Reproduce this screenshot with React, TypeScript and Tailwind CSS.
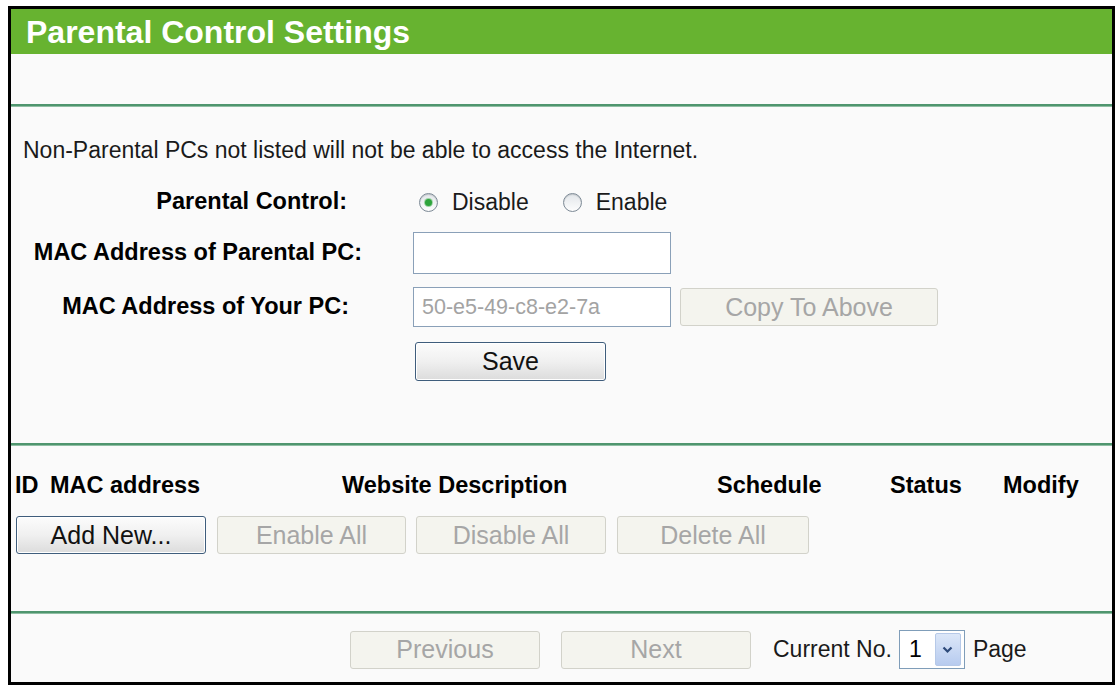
import React from "react";

function Btn({
  label,
  enabled,
  className,
}: {
  label: string;
  enabled?: boolean;
  className: string;
}) {
  return (
    <div
      className={
        (enabled
          ? "border border-[#3f5d7c] bg-linear-to-b from-[#fcfcfc] via-[#f0f0f0] to-[#dcdcdc] text-[#111] shadow-[inset_0_0_0_1px_#ffffff] "
          : "border border-[#d2d2ca] bg-[#f4f4ee] text-[#a6a6a6] ") +
        "rounded-[3px] flex items-center justify-center text-[25px] leading-none shrink-0 " +
        className
      }
    >
      {label}
    </div>
  );
}

function Radio({ checked }: { checked?: boolean }) {
  return (
    <div className="w-[19px] h-[19px] rounded-full border border-[#7d8a96] bg-linear-to-b from-[#e2e6ea] to-[#fdfdfd] flex items-center justify-center shrink-0 shadow-[inset_0_1px_1px_rgba(0,0,0,0.15)]">
      {checked && (
        <div className="w-[7px] h-[7px] rounded-full bg-[#2ea43c] shadow-[0_0_0_1px_#9fd3a6]" />
      )}
    </div>
  );
}

function Line() {
  return <div className="h-[3px] bg-[#4f956e] border-b border-[#8fbea3] shrink-0" />;
}

export default function App() {
  return (
    <div className="w-[1118px] h-[687px] bg-white pt-[6px] pl-[8px] font-['Liberation_Sans',Arial,sans-serif]">
      <div className="w-[1107px] h-[679px] border-[3px] border-black bg-[#fafafa] flex flex-col">
        {/* Title bar */}
        <div className="h-[45px] bg-[#67b330] flex items-center pl-[15px] shrink-0">
          <span className="text-white font-bold text-[32px] leading-none">
            Parental Control Settings
          </span>
        </div>

        <div className="h-[50px] shrink-0" />
        <Line />

        {/* Intro text */}
        <div className="mt-[30px] pl-[12px] text-[23px] leading-[26px] text-[#1a1a1a]">
          Non-Parental PCs not listed will not be able to access the Internet.
        </div>

        {/* Parental Control row */}
        <div className="mt-[21px] h-[36px] flex items-center">
          <div className="w-[402px] pr-[66px] text-right font-bold text-[23.5px] text-black">
            Parental Control:
          </div>
          <div className="ml-[6px] flex items-center text-[23px] text-[#1a1a1a]">
            <Radio checked />
            <span className="ml-[14px]">Disable</span>
            <div className="ml-[34px]">
              <Radio />
            </div>
            <span className="ml-[14px]">Enable</span>
          </div>
        </div>

        {/* MAC Address of Parental PC */}
        <div className="mt-[12px] h-[42px] flex items-center">
          <div className="w-[402px] pr-[51px] text-right font-bold text-[23.5px] text-black">
            MAC Address of Parental PC:
          </div>
          <div className="w-[258px] h-[42px] border border-[#8aa0b8] bg-white" />
        </div>

        {/* MAC Address of Your PC */}
        <div className="mt-[13px] h-[40px] flex items-center">
          <div className="w-[402px] pr-[64px] text-right font-bold text-[23.5px] text-black">
            MAC Address of Your PC:
          </div>
          <div className="w-[258px] h-[40px] border border-[#8aa0b8] bg-white flex items-center pl-[8px] text-[21.5px] text-[#a3a3a3]">
            50-e5-49-c8-e2-7a
          </div>
          <Btn label="Copy To Above" className="ml-[9px] w-[258px] h-[38px]" />
        </div>

        {/* Save */}
        <div className="mt-[15px] h-[39px] flex items-center pl-[404px]">
          <Btn label="Save" enabled className="w-[191px] h-[39px]" />
        </div>

        <div className="h-[62px] shrink-0" />
        <Line />

        {/* Table header */}
        <div className="mt-[27px] h-[26px] flex items-center font-bold text-[23.5px] text-black pl-[4px]">
          <div className="w-[35px]">ID</div>
          <div className="w-[292px]">MAC address</div>
          <div className="w-[375px]">Website Description</div>
          <div className="w-[173px]">Schedule</div>
          <div className="w-[113px]">Status</div>
          <div>Modify</div>
        </div>

        {/* Action buttons */}
        <div className="mt-[17px] h-[38px] flex items-center pl-[5px]">
          <Btn label="Add New..." enabled className="w-[190px] h-[38px]" />
          <Btn label="Enable All" className="ml-[11px] w-[189px] h-[38px]" />
          <Btn label="Disable All" className="ml-[10px] w-[190px] h-[38px]" />
          <Btn label="Delete All" className="ml-[11px] w-[192px] h-[38px]" />
        </div>

        <div className="h-[57px] shrink-0" />
        <Line />

        {/* Pagination */}
        <div className="mt-[16px] h-[39px] flex items-center pl-[339px]">
          <Btn label="Previous" className="w-[190px] h-[38px]" />
          <Btn label="Next" className="ml-[21px] w-[190px] h-[38px]" />
          <span className="ml-[22px] text-[23px] text-[#1a1a1a]">Current No.</span>
          <div className="ml-[7px] w-[66px] h-[39px] border border-[#7f9db9] bg-white flex items-center pl-[9px] pr-[3px]">
            <span className="text-[23px] text-black leading-none">1</span>
            <div className="ml-auto w-[26px] h-[33px] rounded-[2px] border border-[#b6c9e8] bg-linear-to-b from-[#dce7f8] to-[#b7cbef] flex items-center justify-center">
              <svg width="11" height="8" viewBox="0 0 11 8">
                <path d="M1.5 1.5 L5.5 5.5 L9.5 1.5" fill="none" stroke="#2d4a7a" strokeWidth="2.2" />
              </svg>
            </div>
          </div>
          <span className="ml-[8px] text-[23px] text-[#1a1a1a]">Page</span>
        </div>
      </div>
    </div>
  );
}
